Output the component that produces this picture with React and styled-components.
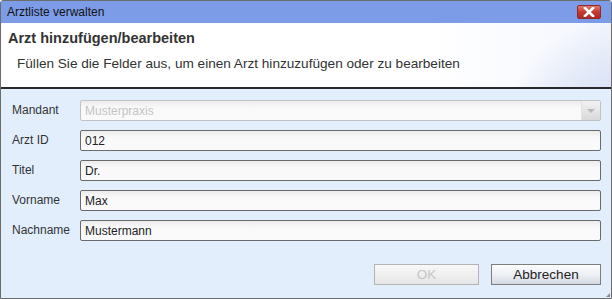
import React from 'react';
import styled, { createGlobalStyle } from 'styled-components';

const Global = createGlobalStyle`
  html, body {
    margin: 0;
    padding: 0;
    background: #ffffff;
  }
  body {
    font-family: "Liberation Sans", Arial, sans-serif;
    font-size: 12px;
  }
`;

const Window = styled.div`
  width: 612px;
  height: 299px;
  box-sizing: border-box;
  border: 1px solid #6c6c6c;
  border-radius: 3px 3px 0 0;
  display: flex;
  flex-direction: column;
  overflow: hidden;
  position: relative;
  background: #e3eefd;
`;

const TitleBar = styled.div`
  height: 22px;
  flex: 0 0 22px;
  background: #7d9ce8;
  display: flex;
  align-items: center;
  justify-content: space-between;
  padding: 0 10px 0 6px;
  color: #111;
  font-size: 12px;
`;

const CloseButton = styled.div`
  width: 24px;
  height: 14px;
  box-sizing: border-box;
  border: 1px solid #8f2b24;
  border-radius: 2px;
  background: linear-gradient(#e07a6f, #c5392f 50%, #b02a22);
  display: flex;
  align-items: center;
  justify-content: center;
`;

const Header = styled.div`
  height: 66px;
  flex: 0 0 66px;
  box-sizing: border-box;
  border-bottom: 2px solid #2a2a2a;
  background:
    radial-gradient(ellipse 140px 120px at 640px 110px, #c9d4f0 0%, #dfe6f7 55%, rgba(255,255,255,0) 100%),
    linear-gradient(90deg, #ffffff 70%, #f3f6fd 100%);
  padding: 7px 7px 0;
`;

const HeaderTitle = styled.div`
  font-weight: bold;
  font-size: 14.5px;
  color: #333;
`;

const HeaderText = styled.div`
  margin-top: 10px;
  margin-left: 9px;
  font-size: 13.6px;
  color: #333;
`;

const Body = styled.div`
  flex: 1;
  display: flex;
  flex-direction: column;
  padding: 11px 10px 0 11px;
`;

const Form = styled.div`
  display: flex;
  flex-direction: column;
  gap: 9px;
`;

const Row = styled.div`
  display: flex;
  align-items: center;
`;

const Label = styled.div`
  width: 68px;
  color: #333;
  font-size: 12px;
  margin-top: -2px;
`;

const Field = styled.div`
  flex: 1;
  height: 21px;
  box-sizing: border-box;
  border: 1px solid ${p => (p.disabled ? '#c2c2c2' : '#6a6a6a')};
  border-radius: 2px;
  background: linear-gradient(#ececec, #f9f9f9 35%, #fafafa);
  display: flex;
  align-items: center;
  padding-left: 4px;
  color: ${p => (p.disabled ? '#c4c4c4' : '#222')};
  font-size: 12px;
  overflow: hidden;
`;

const FieldText = styled.span`
  flex: 1;
`;

const DropButton = styled.div`
  width: 18px;
  align-self: stretch;
  background: linear-gradient(#f2f2f2, #d9d9d9);
  border-left: 1px solid #e4e4e4;
  display: flex;
  align-items: center;
  justify-content: center;
`;

const Arrow = styled.div`
  width: 0;
  height: 0;
  border-left: 4px solid transparent;
  border-right: 4px solid transparent;
  border-top: 4px solid #b8b8b8;
`;

const Buttons = styled.div`
  display: flex;
  justify-content: flex-end;
  gap: 12px;
  margin-top: 23px;
`;

const Button = styled.div`
  width: ${p => p.w}px;
  height: 21px;
  box-sizing: border-box;
  border: 1px solid ${p => (p.disabled ? '#b4b4b4' : '#7e7e7e')};
  background: ${p =>
    p.disabled
      ? 'linear-gradient(#f8f8f8, #e6e6e6)'
      : 'linear-gradient(#fbfbfb, #eef0f4 50%, #d3d8e2)'};
  color: ${p => (p.disabled ? '#c6c6c6' : '#222')};
  display: flex;
  align-items: center;
  justify-content: center;
  font-size: 13.5px;
`;

const Grip = styled.div`
  position: absolute;
  right: 1px;
  bottom: 1px;
  width: 0;
  height: 0;
  border-left: 4px solid transparent;
  border-bottom: 4px solid #8a8a8a;
`;

const fields = [
  { label: 'Arzt ID', value: '012' },
  { label: 'Titel', value: 'Dr.' },
  { label: 'Vorname', value: 'Max' },
  { label: 'Nachname', value: 'Mustermann' },
];

export default function App() {
  return (
    <>
      <Global />
      <Window>
        <TitleBar>
          <span>Arztliste verwalten</span>
          <CloseButton>
            <svg width="12" height="10" viewBox="0 0 12 10">
              <path d="M2 1 L10 9 M10 1 L2 9" stroke="#fff" strokeWidth="2.6" strokeLinecap="square" />
            </svg>
          </CloseButton>
        </TitleBar>
        <Header>
          <HeaderTitle>Arzt hinzufügen/bearbeiten</HeaderTitle>
          <HeaderText>Füllen Sie die Felder aus, um einen Arzt hinzuzufügen oder zu bearbeiten</HeaderText>
        </Header>
        <Body>
          <Form>
            <Row>
              <Label>Mandant</Label>
              <Field disabled>
                <FieldText>Musterpraxis</FieldText>
                <DropButton>
                  <Arrow />
                </DropButton>
              </Field>
            </Row>
            {fields.map(f => (
              <Row key={f.label}>
                <Label>{f.label}</Label>
                <Field>
                  <FieldText>{f.value}</FieldText>
                </Field>
              </Row>
            ))}
          </Form>
          <Buttons>
            <Button w={105} disabled>OK</Button>
            <Button w={110}>Abbrechen</Button>
          </Buttons>
        </Body>
        <Grip />
      </Window>
    </>
  );
}
